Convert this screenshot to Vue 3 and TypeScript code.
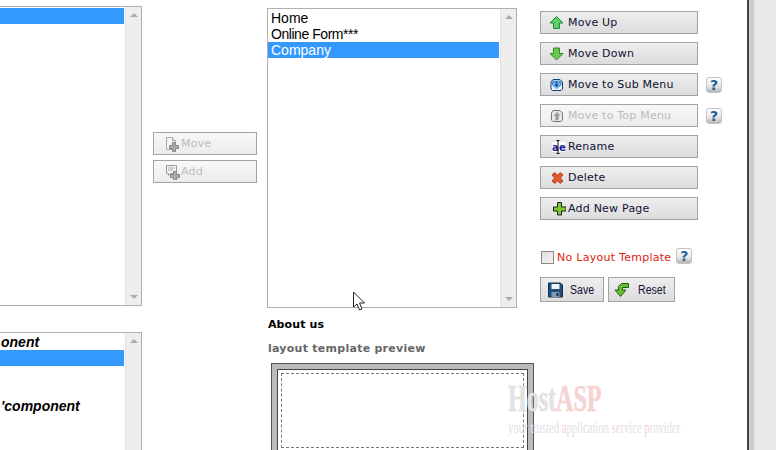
<script setup lang="ts">
defineOptions({
  name: 'MenuEditor',
})

type Action = { label: string; icon: string; disabled?: boolean; help?: boolean }

const actions: Action[] = [
  { label: 'Move Up', icon: 'up' },
  { label: 'Move Down', icon: 'down' },
  { label: 'Move to Sub Menu', icon: 'sub', help: true },
  { label: 'Move to Top Menu', icon: 'top', disabled: true, help: true },
  { label: 'Rename', icon: 'rename' },
  { label: 'Delete', icon: 'delete' },
  { label: 'Add New Page', icon: 'add' },
]

const pages = ['Home', 'Online Form***', 'Company']
const components = ['onent', '', '', '', "'component"]
</script>

<template>
  <div class="page">
    <div class="col-left">
      <div class="list list-top clipped">
        <ul class="rows">
          <li class="row selected"></li>
        </ul>
        <div class="scrollbar">
          <i class="arrow up"></i>
          <i class="arrow down"></i>
        </div>
      </div>
      <div class="list list-bottom clipped">
        <ul class="rows">
          <li
            v-for="(text, i) in components"
            :key="i"
            class="row italic"
            :class="{ selected: i === 1 }"
          >
            {{ text }}
          </li>
        </ul>
        <div class="scrollbar">
          <i class="arrow up"></i>
        </div>
      </div>
    </div>

    <div class="col-move">
      <button class="btn small disabled" type="button">
        <svg class="icon" viewBox="0 0 16 16">
          <path d="M1.5 1.5h6l3 3v9h-9z" fill="#f4f4f4" stroke="#aaa" />
          <path d="M7.5 1.5v3h3" fill="#ddd" stroke="#aaa" />
          <path d="M7.5 6.5h3v3h3v3h-3v3h-3v-3h-3v-3h3z" fill="#aaa" stroke="#888" />
        </svg>
        Move
      </button>
      <button class="btn small disabled" type="button">
        <svg class="icon" viewBox="0 0 16 16">
          <path d="M1.5 1.5h10v8h-6l-2 2v-2h-2z" fill="#f4f4f4" stroke="#999" />
          <path d="M3 4h7M3 6h5" stroke="#aaa" />
          <path d="M8.5 7.5h3v3h3v3h-3v2.500h-3v-2.500h-3v-3h3z" fill="#aaa" stroke="#888" />
        </svg>
        Add
      </button>
    </div>

    <div class="col-pages">
      <div class="list list-pages">
        <ul class="rows">
          <li
            v-for="(page, i) in pages"
            :key="page"
            class="row"
            :class="{ selected: i === 2, tight: i === 1 }"
          >
            {{ page }}
          </li>
        </ul>
        <div class="scrollbar">
          <i class="arrow up"></i>
          <i class="arrow down"></i>
        </div>
      </div>
      <p class="about">About us</p>
      <p class="preview-title">layout template preview</p>
      <div class="preview">
        <div class="preview-inner">
          <div class="preview-dashed"></div>
        </div>
      </div>
    </div>

    <div class="col-actions">
      <div v-for="action in actions" :key="action.label" class="action">
        <button class="btn wide" :class="{ disabled: action.disabled }" type="button">
          <svg class="icon" viewBox="0 0 16 16">
            <template v-if="action.icon === 'up'">
              <path d="M6.500 1.500 13 8H9.500v5.500h-6V8H0z" fill="#5fd068" stroke="#1c8a34" />
            </template>
            <template v-else-if="action.icon === 'down'">
              <path d="M6.500 14 13 7.500H9.500V2h-6v5.500H0z" fill="#6cc650" stroke="#2f8a2a" />
            </template>
            <template v-else-if="action.icon === 'sub'">
              <path d="M3 2.500h7l2.500 2.500v7l-1.500 1.500H2.500L1 12V5z" fill="#e6f3fb" stroke="#123f73" />
              <path d="M3 3.500h7L11.500 5v3L6.500 12 2 8V5z" fill="#3d8fd6" />
              <path d="M5 3.500h3v3.500h2l-3.500 4L3 7h2z" fill="#1c62ae" stroke="#d8ecfa" stroke-width=".6" />
            </template>
            <template v-else-if="action.icon === 'top'">
              <path d="M3 2.500h7l2.500 2.500v7l-1.500 1.500H3L1.500 12V5z" fill="#e8e8e8" stroke="#777" />
              <path d="M7 3.500 11 8H9v4.500H5V8H3z" fill="#9c9c9c" stroke="#eee" stroke-width=".6" />
            </template>
            <template v-else-if="action.icon === 'rename'">
              <rect x="2" y="3" width="13" height="10" fill="#fff" />
              <text x="2" y="11.500" class="icon-letter">a</text>
              <text x="9" y="11.500" class="icon-letter">e</text>
              <path d="M6.500 1.500h3M8 1.500v13M6.500 14.500h3" fill="none" stroke="#111" />
            </template>
            <template v-else-if="action.icon === 'delete'">
              <path
                d="M4.500 2.500 7.500 5l3-2.500 2.500 2.500-2.500 3 2.500 3-2.500 2.500-3-2.500-3 2.500L2 11l2.500-3L2 5z"
                fill="#e0572a"
                stroke="#a8351a"
                stroke-width=".8"
              />
            </template>
            <template v-else>
              <path d="M7.500 1.500h4V6H16v4h-4.500v4h-4v-4H3.500V6h4z" fill="#7cc92f" stroke="#222" />
            </template>
          </svg>
          <span>{{ action.label }}</span>
        </button>
        <span v-if="action.help" class="help">?</span>
      </div>

      <div class="layout-option">
        <span class="checkbox"></span>
        <span class="layout-label">No Layout Template</span>
        <span class="help">?</span>
      </div>

      <div class="form-buttons">
        <button class="btn form save" type="button">
          <svg class="icon" viewBox="0 0 16 16">
            <path d="M.5 1h12l2 2v12H.5z" fill="#1f4e79" stroke="#12304c" />
            <rect x="3.500" y="2" width="8" height="5" fill="#eef2f5" />
            <rect x="3.500" y="10" width="8" height="5" fill="#7d9ab5" />
            <rect x="8.500" y="11" width="2" height="3" fill="#12304c" />
          </svg>
          <span class="form-text">Save</span>
        </button>
        <button class="btn form reset" type="button">
          <svg class="icon" viewBox="0 0 16 16">
            <path d="M14.500 1.500H7.500L4.500 4.500V8H1l5.500 6.500L12 8H8.500V5.500h6z" fill="#68bd2c" stroke="#1e5a12" />
          </svg>
          <span class="form-text">Reset</span>
        </button>
      </div>
    </div>

    <div class="rail"></div>

    <div class="watermark">
      <div class="wm-name">Host<span class="pink">ASP</span></div>
      <div class="wm-tag">
        your trusted <span class="pink">a</span>pplication <span class="pink">s</span>ervice
        <span class="pink">p</span>rovider
      </div>
    </div>

    <svg class="cursor" width="16" height="21" viewBox="0 0 16 21">
      <path
        d="M1.500 1v15l3.500-3 2.500 6 2.500-1-2.500-6h5z"
        fill="#fff"
        stroke="#222"
        stroke-linejoin="round"
      />
    </svg>
  </div>
</template>

<style scoped>
.page {
  position: relative;
  display: flex;
  width: 776px;
  height: 450px;
  overflow: hidden;
  background: #fff;
  font-family: 'DejaVu Sans', Verdana, sans-serif;
  font-size: 11px;
}

.col-left {
  display: flex;
  flex-direction: column;
  flex: none;
  gap: 26px;
  width: 142px;
  padding-top: 6px;
}

.col-move {
  display: flex;
  flex-direction: column;
  flex: none;
  gap: 5px;
  width: 104px;
  margin-left: 11px;
  padding-top: 132px;
}

.col-pages {
  flex: none;
  width: 250px;
  margin-left: 10px;
  padding-top: 8px;
}

.col-actions {
  flex: none;
  width: 207px;
  margin-left: 23px;
  padding-top: 11px;
}

.list {
  display: flex;
  flex: none;
  box-sizing: border-box;
  border: 1px solid #b0b0b0;
  background: #fff;
  font-family: 'Liberation Sans', Arial, sans-serif;
  font-size: 14px;
}

.clipped {
  border-left: 0;
}

.list-top {
  height: 300px;
}

.list-bottom {
  height: 130px;
}

.list-pages {
  height: 300px;
}

.rows {
  flex: 1;
  margin: 0 1px 0 0;
  padding: 1px 0 0;
  list-style: none;
}

.row {
  height: 16px;
  padding-left: 3px;
  color: #000;
  line-height: 16px;
  white-space: pre;
}

.row.tight {
  letter-spacing: -0.45px;
}

.clipped .row {
  padding-left: 1px;
}

.row.selected {
  background: #3399ff;
  color: #fff;
}

.row.italic {
  font-weight: 700;
  font-style: italic;
}

.scrollbar {
  position: relative;
  flex: none;
  box-sizing: border-box;
  width: 16px;
  border-left: 1px solid #e2e2e2;
  background: #eeeeee;
}

.arrow {
  position: absolute;
  left: 4px;
  width: 0;
  height: 0;
  border-right: 4px solid transparent;
  border-left: 4px solid transparent;
}

.arrow.up {
  top: 6px;
  border-bottom: 4px solid #aaa;
}

.arrow.down {
  bottom: 6px;
  border-top: 4px solid #aaa;
}

.btn {
  display: flex;
  align-items: center;
  box-sizing: border-box;
  height: 23px;
  padding: 0;
  border: 1px solid #a3a3a3;
  background: linear-gradient(180deg, #eeeeee 0%, #dcdcdc 100%);
  color: #111133;
  font-family: inherit;
  font-size: 11px;
  letter-spacing: 0.22px;
}

.btn.disabled {
  background: linear-gradient(180deg, #f8f8f8 0%, #ececec 100%);
  color: #bbbbbb;
}

.btn.small {
  width: 104px;
  padding-left: 11px;
}

.btn.wide {
  gap: 2px;
  width: 158px;
  padding-left: 9px;
}

.btn.form {
  height: 25px;
  font-family: 'Liberation Sans', Arial, sans-serif;
  font-size: 12px;
  letter-spacing: 0;
}

.form-text {
  transform: scaleX(0.88);
  transform-origin: left;
}

.btn.save {
  gap: 6px;
  width: 64px;
  padding-left: 7px;
}

.btn.reset {
  gap: 8px;
  width: 67px;
  padding-left: 5px;
}

.icon {
  flex: none;
  width: 16px;
  height: 16px;
}

.icon-letter {
  fill: #1a1a9c;
  font-family: 'DejaVu Sans', Verdana, sans-serif;
  font-size: 10px;
  font-weight: 700;
}

.action {
  display: flex;
  align-items: center;
  gap: 8px;
  margin-bottom: 8px;
}

.help {
  display: block;
  flex: none;
  box-sizing: border-box;
  width: 16px;
  height: 16px;
  border: 1px solid #c4c4c4;
  border-radius: 3px;
  background: linear-gradient(180deg, #ffffff 0%, #e6e6e6 60%, #b5b5b5 100%);
  color: #1f5f99;
  font-size: 14px;
  font-weight: 700;
  line-height: 14px;
  text-align: center;
}

.layout-option {
  display: flex;
  align-items: center;
  height: 16px;
  margin-top: 29px;
  margin-left: 1px;
}

.checkbox {
  flex: none;
  box-sizing: border-box;
  width: 13px;
  height: 13px;
  border: 1px solid #8a8a8a;
  background: linear-gradient(135deg, #dcdcdc, #f6f6f6);
}

.layout-label {
  margin-left: 3px;
  color: #dd2211;
  letter-spacing: 0.27px;
}

.layout-option .help {
  margin-top: -3px;
  margin-left: 5px;
}

.form-buttons {
  display: flex;
  gap: 4px;
  margin-top: 12px;
}

.about {
  margin: 10px 0 0 1px;
  color: #000;
  font-weight: 700;
  line-height: 14px;
  letter-spacing: 0.1px;
}

.preview-title {
  margin: 10px 0 0 1px;
  color: #666666;
  font-weight: 700;
  line-height: 14px;
  letter-spacing: 0.26px;
}

.preview {
  box-sizing: border-box;
  width: 263px;
  height: 110px;
  margin: 7px 0 0 4px;
  border: 1px solid #555;
  padding: 5px;
  background: #bbbbbb;
}

.preview-inner {
  box-sizing: border-box;
  height: 100%;
  border: 1px solid #444;
  padding: 3px;
  background: #fff;
}

.preview-dashed {
  box-sizing: border-box;
  height: 75px;
  border: 1px dashed #7a7a7a;
}

.rail {
  flex: none;
  box-sizing: border-box;
  width: 29px;
  border-left: 2px solid #444;
  background: linear-gradient(90deg, #cccccc 0, #cccccc 5px, #e8e8e8 5px);
}

.watermark {
  position: absolute;
  top: 380px;
  left: 508px;
  color: #e2e2e2;
  font-family: 'Liberation Serif', 'Times New Roman', serif;
  white-space: nowrap;
  pointer-events: none;
}

.wm-name {
  font-size: 37px;
  font-weight: 700;
  line-height: 38px;
  -webkit-text-stroke: 0.6px currentColor;
  transform: scaleX(0.65);
  transform-origin: left;
}

.wm-tag {
  font-size: 17px;
  line-height: 19px;
  transform: scaleX(0.625);
  transform-origin: left;
}

.pink {
  color: #f6d2d2;
}

.cursor {
  position: absolute;
  top: 291px;
  left: 352px;
}
</style>
